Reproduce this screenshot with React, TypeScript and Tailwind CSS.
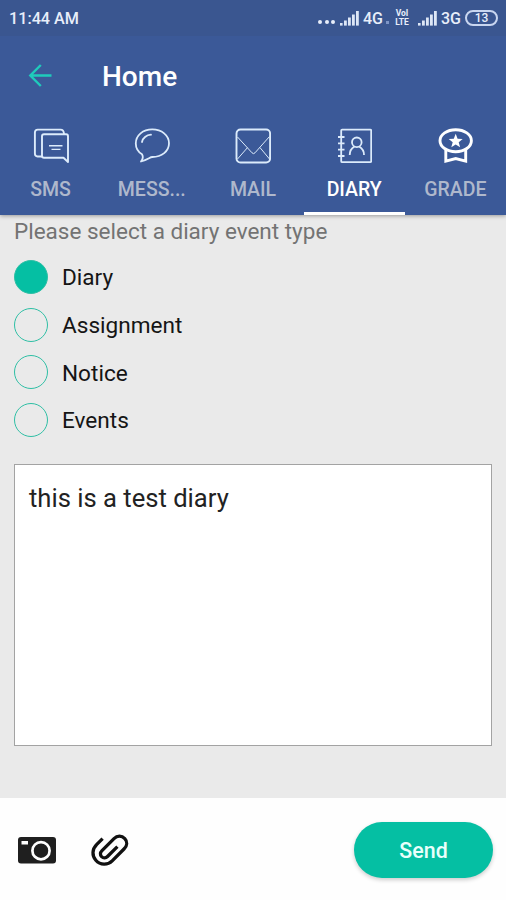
import React, {useState} from 'react';

interface ITab {
  label: string
  icon: React.ReactNode
}

interface IRadioProps {
  label: string
  checked: boolean
  onSelect: () => void
}

const SmsIcon = () => (
  <svg width="36" height="36" viewBox="0 0 36 36" fill="none" stroke="#dcebfb" strokeWidth="1.9" strokeLinejoin="round">
    <path d="M9 28.5H4.5Q1.9 28.5 1.9 25.5V4.5Q1.9 1.6 4.8 1.6H27.5Q30.8 1.6 31 6"/>
    <path d="M11 6.2H33.2Q35 6.2 35 8.2V34L30.5 29.8H11Q9 29.8 9 27.8V8.2Q9 6.2 11 6.2Z"/>
    <path d="M16 17.7H29.5M18.5 21.4H27.5" strokeWidth="1.4"/>
  </svg>
);

const MessageIcon = () => (
  <svg width="36" height="36" viewBox="0 0 36 36" fill="none" stroke="#dcebfb" strokeWidth="1.8" strokeLinecap="round" strokeLinejoin="round">
    <path d="M8 26.3C4 23.8 1.8 20 1.8 15.5C1.8 7.3 9 1.4 18.3 1.4S35 7.3 35 15.3S27.8 29 18.3 29C15.8 29 14.5 31.5 7 33.5C9 31 9.3 28.5 8 26.3Z"/>
    <path d="M8 14C8.6 10 12.5 7 17 6.7"/>
  </svg>
);

const MailIcon = () => (
  <svg width="36" height="36" viewBox="0 0 36 36" fill="none" stroke="#dcebfb">
    <rect x="1.5" y="1.5" width="33.6" height="33" rx="4" strokeWidth="1.9"/>
    <path d="M2.5 9L17 24.8Q18.5 26.5 20 24.8L34.5 8.5M2.5 31L12.5 19.6M25 19.6L34.5 31" strokeWidth="1"/>
  </svg>
);

const DiaryIcon = () => (
  <svg width="36" height="36" viewBox="0 0 36 36" fill="none" stroke="#dcebfb" strokeWidth="1.8">
    <rect x="5.2" y="1.6" width="30" height="32.6" rx="1"/>
    <path d="M2 9H8.5M2 15.3H8.5M2 21.7H8.5M2 28H8.5"/>
    <circle cx="20.8" cy="14.3" r="4.8"/>
    <path d="M13.7 27C13.7 22.5 15.8 20 18.5 18.5M28 27C28 22.5 25.8 20 23.1 18.5"/>
  </svg>
);

const GradeIcon = () => (
  <svg width="36" height="36" viewBox="0 0 36 36" fill="none" stroke="#ffffff" strokeWidth="2.9">
    <ellipse cx="18.7" cy="12.7" rx="15.7" ry="11"/>
    <path d="M8.8 21V33.2L18.7 30.5L28.7 33.2V21"/>
    <path d="M18.7 5.8L20.6 10.7L25.7 11L21.7 14.2L23.1 19.2L18.7 16.4L14.3 19.2L15.7 14.2L11.7 11L16.8 10.7Z" fill="#ffffff" stroke="none"/>
  </svg>
);

const SignalIcon = () => (
  <svg width="20" height="15" viewBox="0 0 20 15" fill="#dde6f6">
    <rect x="0" y="12" width="2.6" height="2.6"/>
    <rect x="4" y="9.5" width="2.8" height="5.1"/>
    <rect x="8" y="6.5" width="2.8" height="8.1"/>
    <rect x="12" y="3.5" width="2.8" height="11.1"/>
    <rect x="16" y="0" width="2.8" height="14.6"/>
  </svg>
);

const CameraIcon = () => (
  <svg width="38" height="27" viewBox="0 0 38 27">
    <rect width="38" height="26.5" rx="3" fill="#1f1f1f"/>
    <rect x="3.5" y="4" width="6.5" height="3.5" fill="#ffffff"/>
    <circle cx="23" cy="13.7" r="8.6" fill="none" stroke="#ffffff" strokeWidth="2.7"/>
  </svg>
);

const ClipIcon = () => (
  <svg width="38" height="33" viewBox="0 0 38 33" fill="none" stroke="#111111" strokeWidth="3.3">
    <path d="M11.6 4.6L5.8 10.4C1 15.2 0.8 21.5 4.8 26.2C9.3 31.3 16.7 31.3 21.2 26.8L33 15C36.4 11.6 36.5 7.4 33.8 4.6C30.8 1.4 26.2 1.4 23 4.6L11 16.6C9 18.6 9 21 10.6 22.6C12.3 24.2 14.8 24.2 16.5 22.5L26.4 12.6"/>
  </svg>
);

const tabs: ITab[] = [
  {label: 'SMS', icon: <SmsIcon/>},
  {label: 'MESS...', icon: <MessageIcon/>},
  {label: 'MAIL', icon: <MailIcon/>},
  {label: 'DIARY', icon: <DiaryIcon/>},
  {label: 'GRADE', icon: <GradeIcon/>},
];

const eventTypes = ['Diary', 'Assignment', 'Notice', 'Events'];

function StatusBar() {
  return (
    <div className="h-9 bg-[#3a5690] text-[#e8eefa] flex items-center pl-[9px] pr-2 font-medium">
      <span className="text-[16.2px] flex-1 pt-[2px]">11:44 AM</span>
      <div className="flex items-center">
        <div className="flex gap-[2.5px] mt-2 mr-[5px]">
          <span className="size-1 rounded-full bg-[#e8eefa]"/>
          <span className="size-1 rounded-full bg-[#e8eefa]"/>
          <span className="size-1 rounded-full bg-[#e8eefa]"/>
        </div>
        <SignalIcon/>
        <span className="text-[16px] ml-[3px] pt-[2px]">4G</span>
        <span className="size-[3px] bg-[#7e95c6] mt-2 ml-[3px] mr-[5px]"/>
        <span className="flex flex-col items-center text-[8.5px] leading-[9px] font-bold w-4 mr-2">
          <span>VoI</span>
          <span>LTE</span>
        </span>
        <SignalIcon/>
        <span className="text-[16px] ml-[3px] mr-1 pt-[2px]">3G</span>
        <span className="w-[33px] h-4 rounded-full border-2 border-[#c9d6f0] flex items-center justify-center text-[12px] leading-none">
          13
        </span>
      </div>
    </div>
  );
}

function RadioRow({label, checked, onSelect}: IRadioProps) {
  return (
    <button onClick={onSelect} role="radio" aria-checked={checked} className="h-[47.8px] flex items-center gap-[14px] text-left">
      <span className={`size-[34px] rounded-full border-[1.5px] border-[#2fbfa5] ${checked ? "bg-[#05bfa3]" : ""}`}/>
      <span className="text-[22.6px] pt-[2px] text-[#151515]">{label}</span>
    </button>
  );
}

function App() {
  const [activeTab, setActiveTab] = useState('DIARY');
  const [eventType, setEventType] = useState('Diary');
  const [text, setText] = useState('this is a test diary');

  return (
    <div className="w-[506px] h-[900px] bg-[#eaeaea] flex flex-col overflow-hidden font-[Roboto,sans-serif]">
      <header className="h-[215px] shrink-0 bg-[#3b5998] shadow-[0_1px_4px_rgba(0,0,0,0.35)]">
        <StatusBar/>
        <div className="h-20 flex items-center pl-7">
          <svg width="24" height="24" viewBox="0 0 24 24" fill="none" stroke="#1fcbbb" strokeWidth="2.4">
            <path d="M12.8 1L2.3 11.5L12.8 22M2.5 11.5H23.5"/>
          </svg>
          <h1 className="ml-[50px] pt-[2px] text-[28px] font-medium text-white">Home</h1>
        </div>
        <nav className="h-[99px] grid grid-cols-5">
          {
            tabs.map((tab) => (
              <button
                key={tab.label}
                onClick={() => setActiveTab(tab.label)}
                className={`flex flex-col items-center pt-3 text-[19.5px] font-medium border-b-[3px] ${activeTab === tab.label ? "border-white text-white" : "border-transparent text-[#afb8cc]"}`}
              >
                {tab.icon}
                <span className="mt-[11px]">{tab.label}</span>
              </button>
            ))
          }
        </nav>
      </header>
      <main className="flex-1 pl-[14px] pr-[14px]">
        <p className="text-[22.5px] leading-[33px] text-[#737373]">Please select a diary event type</p>
        <div className="flex flex-col mt-[5px]" role="radiogroup">
          {
            eventTypes.map((type) => (
              <RadioRow key={type} label={type} checked={eventType === type} onSelect={() => setEventType(type)}/>
            ))
          }
        </div>
        <textarea
          value={text}
          onChange={(e) => setText(e.target.value)}
          className="block mt-5 w-full h-[282px] resize-none bg-white border-[1.5px] border-[#a3a3a3] px-[14px] py-[17px] text-[25.6px] leading-8 text-[#222222] outline-none"
        />
      </main>
      <footer className="h-[102px] shrink-0 bg-[#fefefe] flex items-center pl-[18px] pr-[13px] pt-[2px]">
        <button><CameraIcon/></button>
        <button className="ml-[35px]"><ClipIcon/></button>
        <button className="ml-auto w-[139px] h-[56px] pt-[2px] rounded-full bg-[#05bfa3] text-[21.4px] font-medium text-[#e9fffb] shadow-[0_2px_4px_rgba(0,0,0,0.2)]">
          Send
        </button>
      </footer>
    </div>
  );
}

export default App;
